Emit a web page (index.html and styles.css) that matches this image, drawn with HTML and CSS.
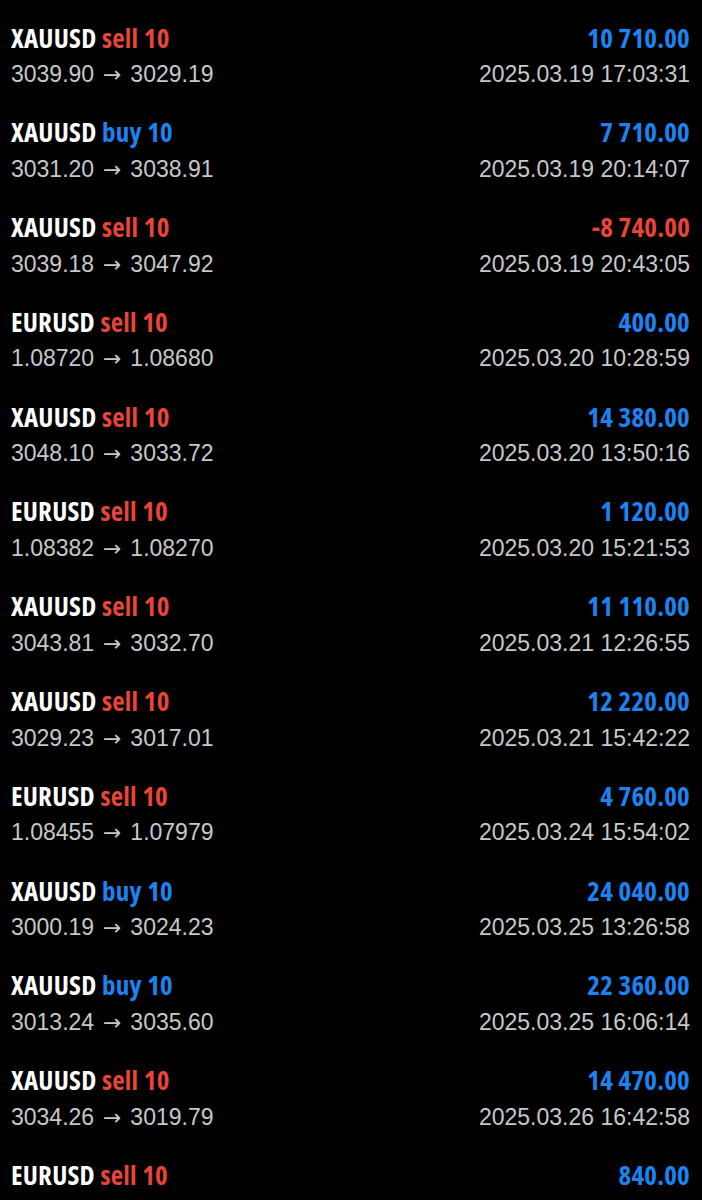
FILE: index.html
```html
<!DOCTYPE html>
<html>
<head>
<meta charset="utf-8">
<link rel="stylesheet" href="styles.css">
</head>
<body>
<ul class="deals">
  <li class="deal"><div class="line"><span class="title">XAUUSD <span class="sell">sell 10</span></span><span class="profit pos">10 710.00</span></div><div class="line sub"><span>3039.90 <span class="arrow">→</span> 3029.19</span><span>2025.03.19 17:03:31</span></div></li>
  <li class="deal"><div class="line"><span class="title">XAUUSD <span class="buy">buy 10</span></span><span class="profit pos">7 710.00</span></div><div class="line sub"><span>3031.20 <span class="arrow">→</span> 3038.91</span><span>2025.03.19 20:14:07</span></div></li>
  <li class="deal"><div class="line"><span class="title">XAUUSD <span class="sell">sell 10</span></span><span class="profit neg">-8 740.00</span></div><div class="line sub"><span>3039.18 <span class="arrow">→</span> 3047.92</span><span>2025.03.19 20:43:05</span></div></li>
  <li class="deal"><div class="line"><span class="title">EURUSD <span class="sell">sell 10</span></span><span class="profit pos">400.00</span></div><div class="line sub"><span>1.08720 <span class="arrow">→</span> 1.08680</span><span>2025.03.20 10:28:59</span></div></li>
  <li class="deal"><div class="line"><span class="title">XAUUSD <span class="sell">sell 10</span></span><span class="profit pos">14 380.00</span></div><div class="line sub"><span>3048.10 <span class="arrow">→</span> 3033.72</span><span>2025.03.20 13:50:16</span></div></li>
  <li class="deal"><div class="line"><span class="title">EURUSD <span class="sell">sell 10</span></span><span class="profit pos">1 120.00</span></div><div class="line sub"><span>1.08382 <span class="arrow">→</span> 1.08270</span><span>2025.03.20 15:21:53</span></div></li>
  <li class="deal"><div class="line"><span class="title">XAUUSD <span class="sell">sell 10</span></span><span class="profit pos">11 110.00</span></div><div class="line sub"><span>3043.81 <span class="arrow">→</span> 3032.70</span><span>2025.03.21 12:26:55</span></div></li>
  <li class="deal"><div class="line"><span class="title">XAUUSD <span class="sell">sell 10</span></span><span class="profit pos">12 220.00</span></div><div class="line sub"><span>3029.23 <span class="arrow">→</span> 3017.01</span><span>2025.03.21 15:42:22</span></div></li>
  <li class="deal"><div class="line"><span class="title">EURUSD <span class="sell">sell 10</span></span><span class="profit pos">4 760.00</span></div><div class="line sub"><span>1.08455 <span class="arrow">→</span> 1.07979</span><span>2025.03.24 15:54:02</span></div></li>
  <li class="deal"><div class="line"><span class="title">XAUUSD <span class="buy">buy 10</span></span><span class="profit pos">24 040.00</span></div><div class="line sub"><span>3000.19 <span class="arrow">→</span> 3024.23</span><span>2025.03.25 13:26:58</span></div></li>
  <li class="deal"><div class="line"><span class="title">XAUUSD <span class="buy">buy 10</span></span><span class="profit pos">22 360.00</span></div><div class="line sub"><span>3013.24 <span class="arrow">→</span> 3035.60</span><span>2025.03.25 16:06:14</span></div></li>
  <li class="deal"><div class="line"><span class="title">XAUUSD <span class="sell">sell 10</span></span><span class="profit pos">14 470.00</span></div><div class="line sub"><span>3034.26 <span class="arrow">→</span> 3019.79</span><span>2025.03.26 16:42:58</span></div></li>
  <li class="deal"><div class="line"><span class="title">EURUSD <span class="sell">sell 10</span></span><span class="profit pos">840.00</span></div></li>
</ul>
</body>
</html>
```
FILE: styles.css
```css
html, body {
  margin: 0;
  padding: 0;
  background: #000;
}
.deals {
  list-style: none;
  margin: 0;
  padding: 0;
}
.deal {
  box-sizing: border-box;
  height: 94.8px;
  padding: 18.5px 12px 0 11px;
  display: flex;
  flex-direction: column;
}
.line {
  display: flex;
  justify-content: space-between;
  align-items: center;
  height: 37.5px;
  white-space: nowrap;
}
.title, .profit {
  font-family: "Open Sans", sans-serif;
  font-stretch: 75%;
  font-weight: 700;
  font-size: 27px;
  letter-spacing: 0.2px;
  word-spacing: 0.5px;
  line-height: 37.5px;
}
.title {
  color: #fff;
}
.sell, .neg {
  color: #e8443a;
}
.buy, .pos {
  color: #1b84f2;
}
.sub {
  font-family: "Liberation Sans", Arial, sans-serif;
  font-size: 23px;
  line-height: 37.5px;
  color: #c8c8c8;
}
.arrow {
  font-family: "DejaVu Sans", sans-serif;
  font-size: 22px;
  margin: 0 2.5px;
}
```
